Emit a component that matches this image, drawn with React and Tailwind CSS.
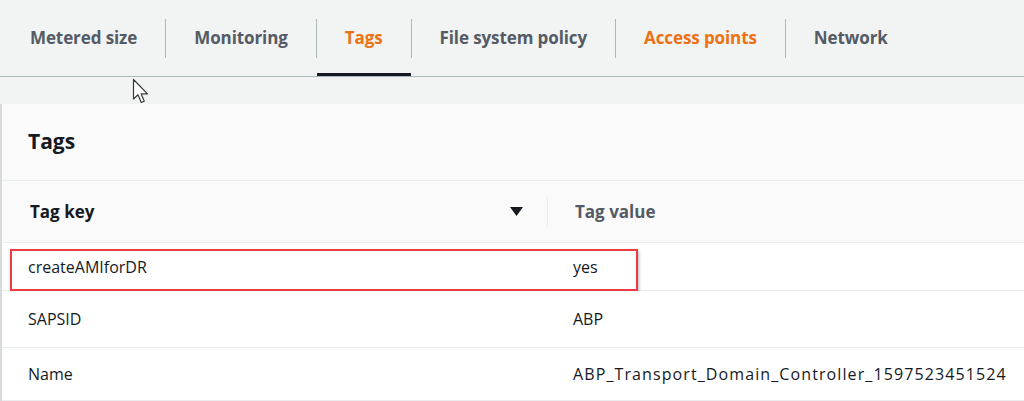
import React from 'react';

const tabs = [
    { label: 'Metered size' },
    { label: 'Monitoring' },
    { label: 'Tags', active: true },
    { label: 'File system policy' },
    { label: 'Access points', orange: true },
    { label: 'Network' },
];

const filas = [
    { key: 'createAMIforDR', value: 'yes', h: 'h-[48px]', marcada: true },
    { key: 'SAPSID', value: 'ABP', h: 'h-[57px]' },
    { key: 'Name', value: 'ABP_Transport_Domain_Controller_1597523451524', h: 'h-[53px]', ancho: true },
];

const Cursor = () => (
    <svg className="absolute left-[132px] top-[78px]" width="20" height="28" viewBox="0 0 20 28">
        <path d="M1.5 1.5 L1.5 21 L6 16.8 L9.3 24.5 L12.3 23.2 L9.1 15.8 L15.5 15.8 Z" fill="#ffffff" stroke="#3a3a3a" strokeWidth="1.2" strokeLinejoin="round" />
    </svg>
);

const App = () => {
    return (
        <div className="relative w-[1024px] h-[401px] overflow-hidden bg-[#f2f3f3] font-['Open_Sans',sans-serif]">
            {/* barra de pestañas */}
            <nav className="h-[77px] flex items-stretch pl-[2px] border-b border-[#aab7b8]">
                {tabs.map((tab, i) => (
                    <React.Fragment key={tab.label}>
                        {i > 0 && <div className="w-px h-[39px] self-center bg-[#aab7b8]" />}
                        <div className={`flex items-center pt-[2px] px-[28px] text-[17px] font-bold tracking-[-0.1px] border-b-[3px] ${tab.active ? 'border-[#16191f] text-[#ec7211]' : 'border-transparent'} ${tab.orange ? 'text-[#ec7211]' : ''} ${!tab.active && !tab.orange ? 'text-[#545b64]' : ''}`}>
                            {tab.label}
                        </div>
                    </React.Fragment>
                ))}
            </nav>

            <div className="h-[27px]" />

            {/* panel de tags */}
            <div className="bg-[#fafafa] border-l-2 border-[#d5dbdb]">
                <div className="h-[77px] flex items-center pl-[26px] border-b border-[#eaeded]">
                    <h2 className="text-[21px] font-bold text-[#16191f]">Tags</h2>
                </div>

                <div className="h-[62px] flex items-center border-b border-[#eaeded]">
                    <div className="w-[545px] flex items-center justify-between pl-[28px] pr-[24px]">
                        <span className="text-[17px] font-bold text-[#16191f]">Tag key</span>
                        <svg width="13" height="9" viewBox="0 0 13 9"><path d="M0 0 L13 0 L6.5 9 Z" fill="#16191f" /></svg>
                    </div>
                    <div className="w-px h-[30px] bg-[#eaeded]" />
                    <span className="pl-[27px] text-[17px] font-bold text-[#545b64]">Tag value</span>
                </div>

                {filas.map((fila) => (
                    <div key={fila.key} className={`relative ${fila.h} flex items-center border-b border-[#eaeded] bg-white text-[16px] text-[#16191f]`}>
                        {fila.marcada && (
                            <div className="absolute left-[8px] top-[6px] w-[628px] h-[42px] border-2 border-[#ec3b43] shadow-[1px_2px_3px_rgba(0,0,0,0.3)]" />
                        )}
                        <span className="w-[545px] pl-[26px]">{fila.key}</span>
                        <span className={`pl-[26px] ${fila.ancho ? 'tracking-[1.1px]' : ''}`}>{fila.value}</span>
                    </div>
                ))}
            </div>

            <Cursor />
        </div>
    );
};

export default App;
